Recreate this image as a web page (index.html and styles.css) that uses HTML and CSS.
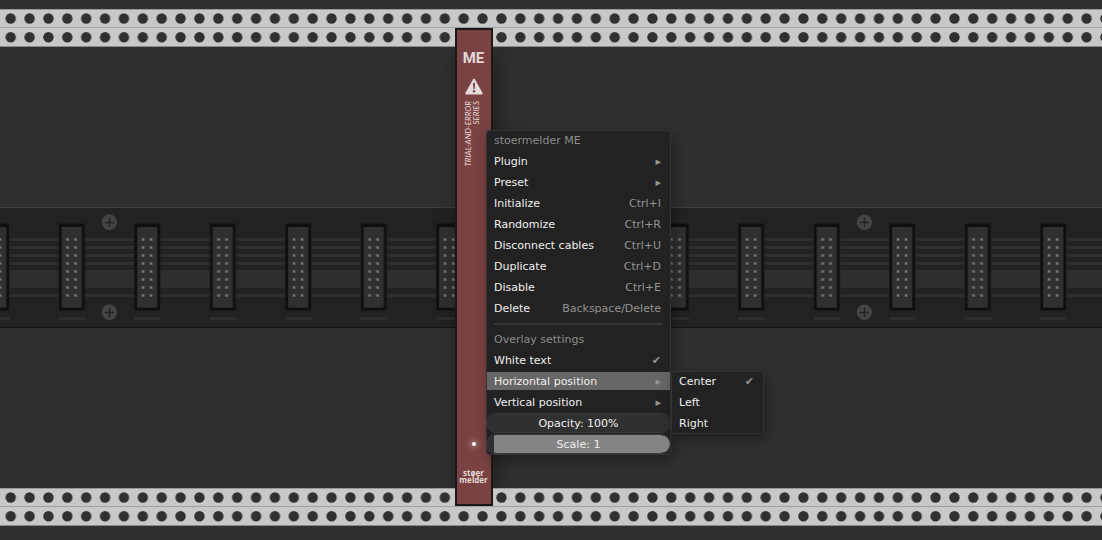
FILE: index.html
```html
<!DOCTYPE html>
<html lang="en">
<head>
<meta charset="utf-8">
<title>Rack</title>
<link rel="stylesheet" href="styles.css">
</head>
<body>
<main class="rack">
  <svg class="rail" width="100%" height="38" aria-hidden="true">
    <defs>
      <pattern id="holes" x="1.3" y="0" width="18.875" height="38" patternUnits="userSpaceOnUse">
        <circle cx="9.4" cy="9.5" r="5.2" fill="#303030"/>
        <circle cx="9.4" cy="28.3" r="5.2" fill="#303030"/>
      </pattern>
    </defs>
    <rect width="100%" height="38" fill="#c8c8c8"/>
    <rect width="100%" height="1" fill="#989898"/>
    <rect width="100%" height="1" y="18" fill="#a0a0a0"/>
    <rect width="100%" height="1" y="37" fill="#888"/>
    <rect width="100%" height="38" fill="url(#holes)"/>
  </svg>

  <svg class="bus" width="100%" height="121" aria-hidden="true">
    <defs>
      <pattern id="connectors" x="-16.9" y="0" width="75.5" height="121" patternUnits="userSpaceOnUse">
        <rect x="0" y="16" width="26.4" height="88" fill="#191919"/>
        <rect x=".6" y="17" width="25.2" height="86" fill="#0f0f0f"/>
        <rect x="3.2" y="20" width="20.2" height="81" fill="#252525"/>
        <rect x="3.2" y="20" width="19.6" height="80" fill="#303030"/>
        <g stroke="#565656" stroke-width="3" stroke-dasharray="3 5">
          <path d="M9 31V90M17 31V90"/>
        </g>
        <g stroke="#909090" stroke-width="1.4" stroke-dasharray="1.4 6.6">
          <path d="M9 31.8V90M17 31.8V90"/>
        </g>
        <path d="M1 111.500H25.500" stroke="#303030" stroke-width="2.400" stroke-linecap="round"/>
      </pattern>
      <pattern id="screws" x="0" y="0" width="755" height="121" patternUnits="userSpaceOnUse">
        <g fill="#444"><circle cx="109.400" cy="15.200" r="7.700"/><circle cx="109.400" cy="105.300" r="7.700"/></g>
        <path d="M104.800 15.500h9.400M109.500 10.500v9.600M104.800 105.500h9.400M109.500 100.600v9.600" stroke="#222" stroke-width="1.500"/>
        <path d="M737.500 1v119" stroke="#262626"/>
      </pattern>
    </defs>
    <rect width="100%" height="121" fill="#222"/>
    <g fill="#2e2e2e">
      <rect width="100%" height="3" y="31"/>
      <rect width="100%" height="3" y="39"/>
      <rect width="100%" height="3" y="47"/>
      <rect width="100%" height="3" y="55"/>
      <rect width="100%" height="18" y="63"/>
      <rect width="100%" height="3" y="87"/>
    </g>
    <rect width="100%" height="121" fill="url(#screws)"/>
    <rect width="100%" height="121" fill="url(#connectors)"/>
    <rect width="100%" height="1" fill="#404040"/>
    <rect width="100%" height="1" y="120" fill="#151515"/>
  </svg>

  <svg class="rail" width="100%" height="38" aria-hidden="true">
    <rect width="100%" height="38" fill="#c8c8c8"/>
    <rect width="100%" height="1" fill="#989898"/>
    <rect width="100%" height="1" y="18" fill="#a0a0a0"/>
    <rect width="100%" height="1" y="37" fill="#888"/>
    <rect width="100%" height="38" fill="url(#holes)"/>
  </svg>

  <section class="module" aria-label="stoermelder ME">
    <h1 class="module-name">ME</h1>
    <svg class="warning" width="18" height="17" viewBox="0 0 18 17" aria-hidden="true">
      <path d="M9 1.500L16.800 15.500H1.200Z" fill="#e4dada" stroke="#e4dada" stroke-width="1.800" stroke-linejoin="round"/>
      <path d="M7.900 5h2.200l-.5 6H8.400Z" fill="#7a4242"/>
      <circle cx="9" cy="13.200" r="1.200" fill="#7a4242"/>
    </svg>
    <p class="series">TRIAL-AND-ERROR<br>SERIES</p>
    <span class="led"></span>
    <p class="brand">støer<br>melder</p>
  </section>

  <div class="menu menu-main" role="menu" aria-label="stoermelder ME">
    <div class="heading">stoermelder ME</div>
    <button class="item" role="menuitem"><span>Plugin</span><span class="hint">▸</span></button>
    <button class="item" role="menuitem"><span>Preset</span><span class="hint">▸</span></button>
    <button class="item" role="menuitem"><span>Initialize</span><span class="hint">Ctrl+I</span></button>
    <button class="item" role="menuitem"><span>Randomize</span><span class="hint">Ctrl+R</span></button>
    <button class="item" role="menuitem"><span>Disconnect cables</span><span class="hint">Ctrl+U</span></button>
    <button class="item" role="menuitem"><span>Duplicate</span><span class="hint">Ctrl+D</span></button>
    <button class="item" role="menuitem"><span>Disable</span><span class="hint">Ctrl+E</span></button>
    <button class="item" role="menuitem"><span>Delete</span><span class="hint">Backspace/Delete</span></button>
    <hr class="separator">
    <div class="heading">Overlay settings</div>
    <button class="item" role="menuitemcheckbox" aria-checked="true"><span>White text</span><span class="hint">✔</span></button>
    <button class="item active" role="menuitem" aria-expanded="true"><span>Horizontal position</span><span class="hint">▸</span></button>
    <button class="item" role="menuitem"><span>Vertical position</span><span class="hint">▸</span></button>
    <div class="slider">
      <input class="range" id="opacity" type="range" min="0" max="100" value="100">
      <label class="slider-label" for="opacity">Opacity: 100%</label>
    </div>
    <div class="slider">
      <input class="range range-filled" id="scale" type="range" min="0" max="1" value="1">
      <label class="slider-label" for="scale">Scale: 1</label>
    </div>
  </div>

  <div class="menu menu-sub" role="menu" aria-label="Horizontal position">
    <button class="item" role="menuitemradio" aria-checked="true"><span>Center</span><span class="hint">✔</span></button>
    <button class="item" role="menuitemradio" aria-checked="false"><span>Left</span></button>
    <button class="item" role="menuitemradio" aria-checked="false"><span>Right</span></button>
  </div>
</main>
</body>
</html>
```

FILE: styles.css
```css
* { box-sizing: border-box; }

body {
  margin: 0;
  background: #303030;
  font-family: "DejaVu Sans", sans-serif;
  font-size: 11px;
  line-height: 20px;
  color: #f0f0f0;
}

.rack {
  position: relative;
  display: flex;
  flex-direction: column;
  gap: 160px;
  min-height: 100vh;
  padding: 9px 0 14px;
  overflow: hidden;
}

.rail, .bus { display: block; flex: none; }

.module {
  position: absolute;
  left: 455px;
  top: 28px;
  width: 38px;
  height: 478px;
  display: flex;
  flex-direction: column;
  align-items: center;
  padding: 18px 1px 21px 0;
  background: #7a4242;
  border: 2px solid #1c1818;
  color: #e4dada;
}

/* The shadow falls on the panel between the rails only. */
.module::before {
  content: "";
  position: absolute;
  inset: 17px -2px 16px;
  box-shadow: 4px 4px 24px rgba(0, 0, 0, 0.35);
  clip-path: inset(0 -40px);
}

.module-name {
  margin: 0;
  font: bold 15px/20px Roboto, sans-serif;
}

.warning { display: block; margin-top: 10px; }

.series {
  margin: 6px 4px 0 0;
  writing-mode: vertical-rl;
  transform: rotate(180deg);
  text-align: right;
  font: italic 8px/8px Lato, sans-serif;
}

.led {
  width: 4px;
  height: 4px;
  margin-top: auto;
  border-radius: 50%;
  background: #fff;
  box-shadow: 0 0 6px 2px rgba(255, 255, 255, 0.3);
}

.brand {
  margin: 23px 0 0;
  text-align: center;
  font: bold 8px/7px "Noto Sans", sans-serif;
}

.menu {
  position: absolute;
  display: flex;
  flex-direction: column;
  gap: 3px;
  background: #222;
  border: 1px solid #333;
  border-radius: 4px;
  box-shadow: 3px 5px 14px rgba(0, 0, 0, 0.35);
}

.menu-main { left: 486px; top: 130px; width: 185px; padding-bottom: 1px; }

.menu-sub { left: 671px; top: 371px; width: 93px; padding-bottom: 1px; }

.heading { height: 18px; padding: 0 7px; color: #8c8c8c; }

.item {
  display: flex;
  justify-content: space-between;
  width: 100%;
  height: 18px;
  padding: 0 9px 0 7px;
  border: 0;
  background: none;
  font: inherit;
  color: inherit;
  text-align: left;
}

.active { background: #666; }

.hint { color: #939393; }

.separator {
  width: auto;
  height: 2px;
  margin: 3px 7px 2px;
  border: 0;
  background: #363636;
}

.slider { position: relative; height: 18px; }

.range {
  appearance: none;
  display: block;
  width: 100%;
  height: 18px;
  margin: 0;
  border-radius: 9px;
  background: #303030;
  outline: 1px solid #3a3a3a;
}

.range-filled { background: linear-gradient(to right, #303030 7px, #848484 7px); }

.range::-webkit-slider-thumb { appearance: none; width: 1px; height: 18px; }

.slider-label {
  position: absolute;
  inset: 0;
  text-align: center;
  pointer-events: none;
}
```
